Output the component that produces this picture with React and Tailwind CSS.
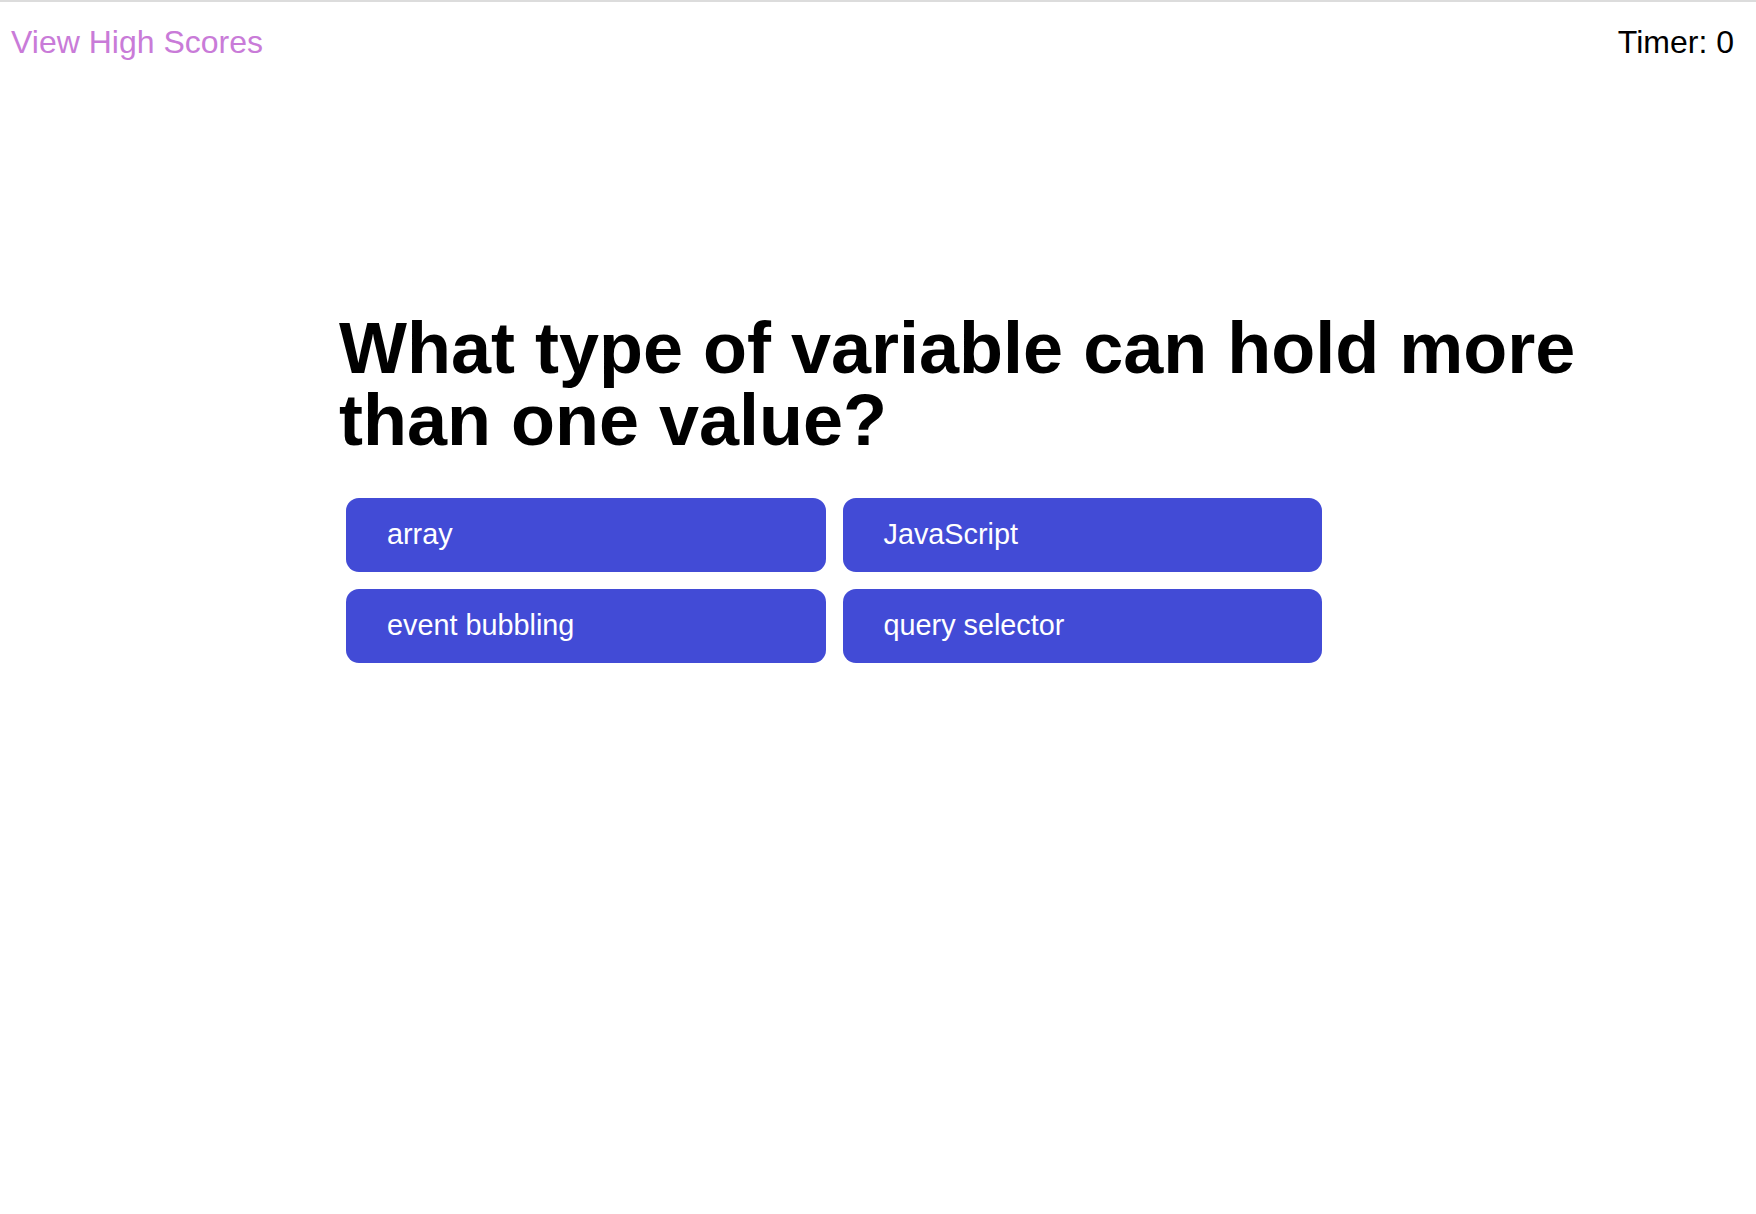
import React from 'react';

const answers = ['array', 'JavaScript', 'event bubbling', 'query selector'];

const App = () => {
  return (
    <div
      className="min-h-screen bg-white border-t-2 border-[#dcdcdc]"
      style={{ fontFamily: '"Liberation Sans", Arial, sans-serif' }}
    >
      <header className="flex justify-between items-start pt-[24px] pl-[11px] pr-[22px]">
        <a href="#" className="text-[32px] leading-none text-[#c97bd8]">
          View High Scores
        </a>
        <p className="text-[32px] leading-none text-black">Timer: 0</p>
      </header>

      <main className="pl-[339px] pt-[254px]">
        <h1 className="text-[72px] leading-[72px] font-bold text-black w-[1300px]">
          What type of variable can hold more than one value?
        </h1>
        <div className="grid grid-cols-2 gap-x-[17px] gap-y-[17px] w-[976px] ml-[7px] mt-[42px]">
          {answers.map((a) => (
            <button
              key={a}
              className="h-[74px] rounded-[13px] bg-[#424bd6] text-white text-[28.8px] text-left pl-[41px]"
            >
              {a}
            </button>
          ))}
        </div>
      </main>
    </div>
  );
};

export default App;
